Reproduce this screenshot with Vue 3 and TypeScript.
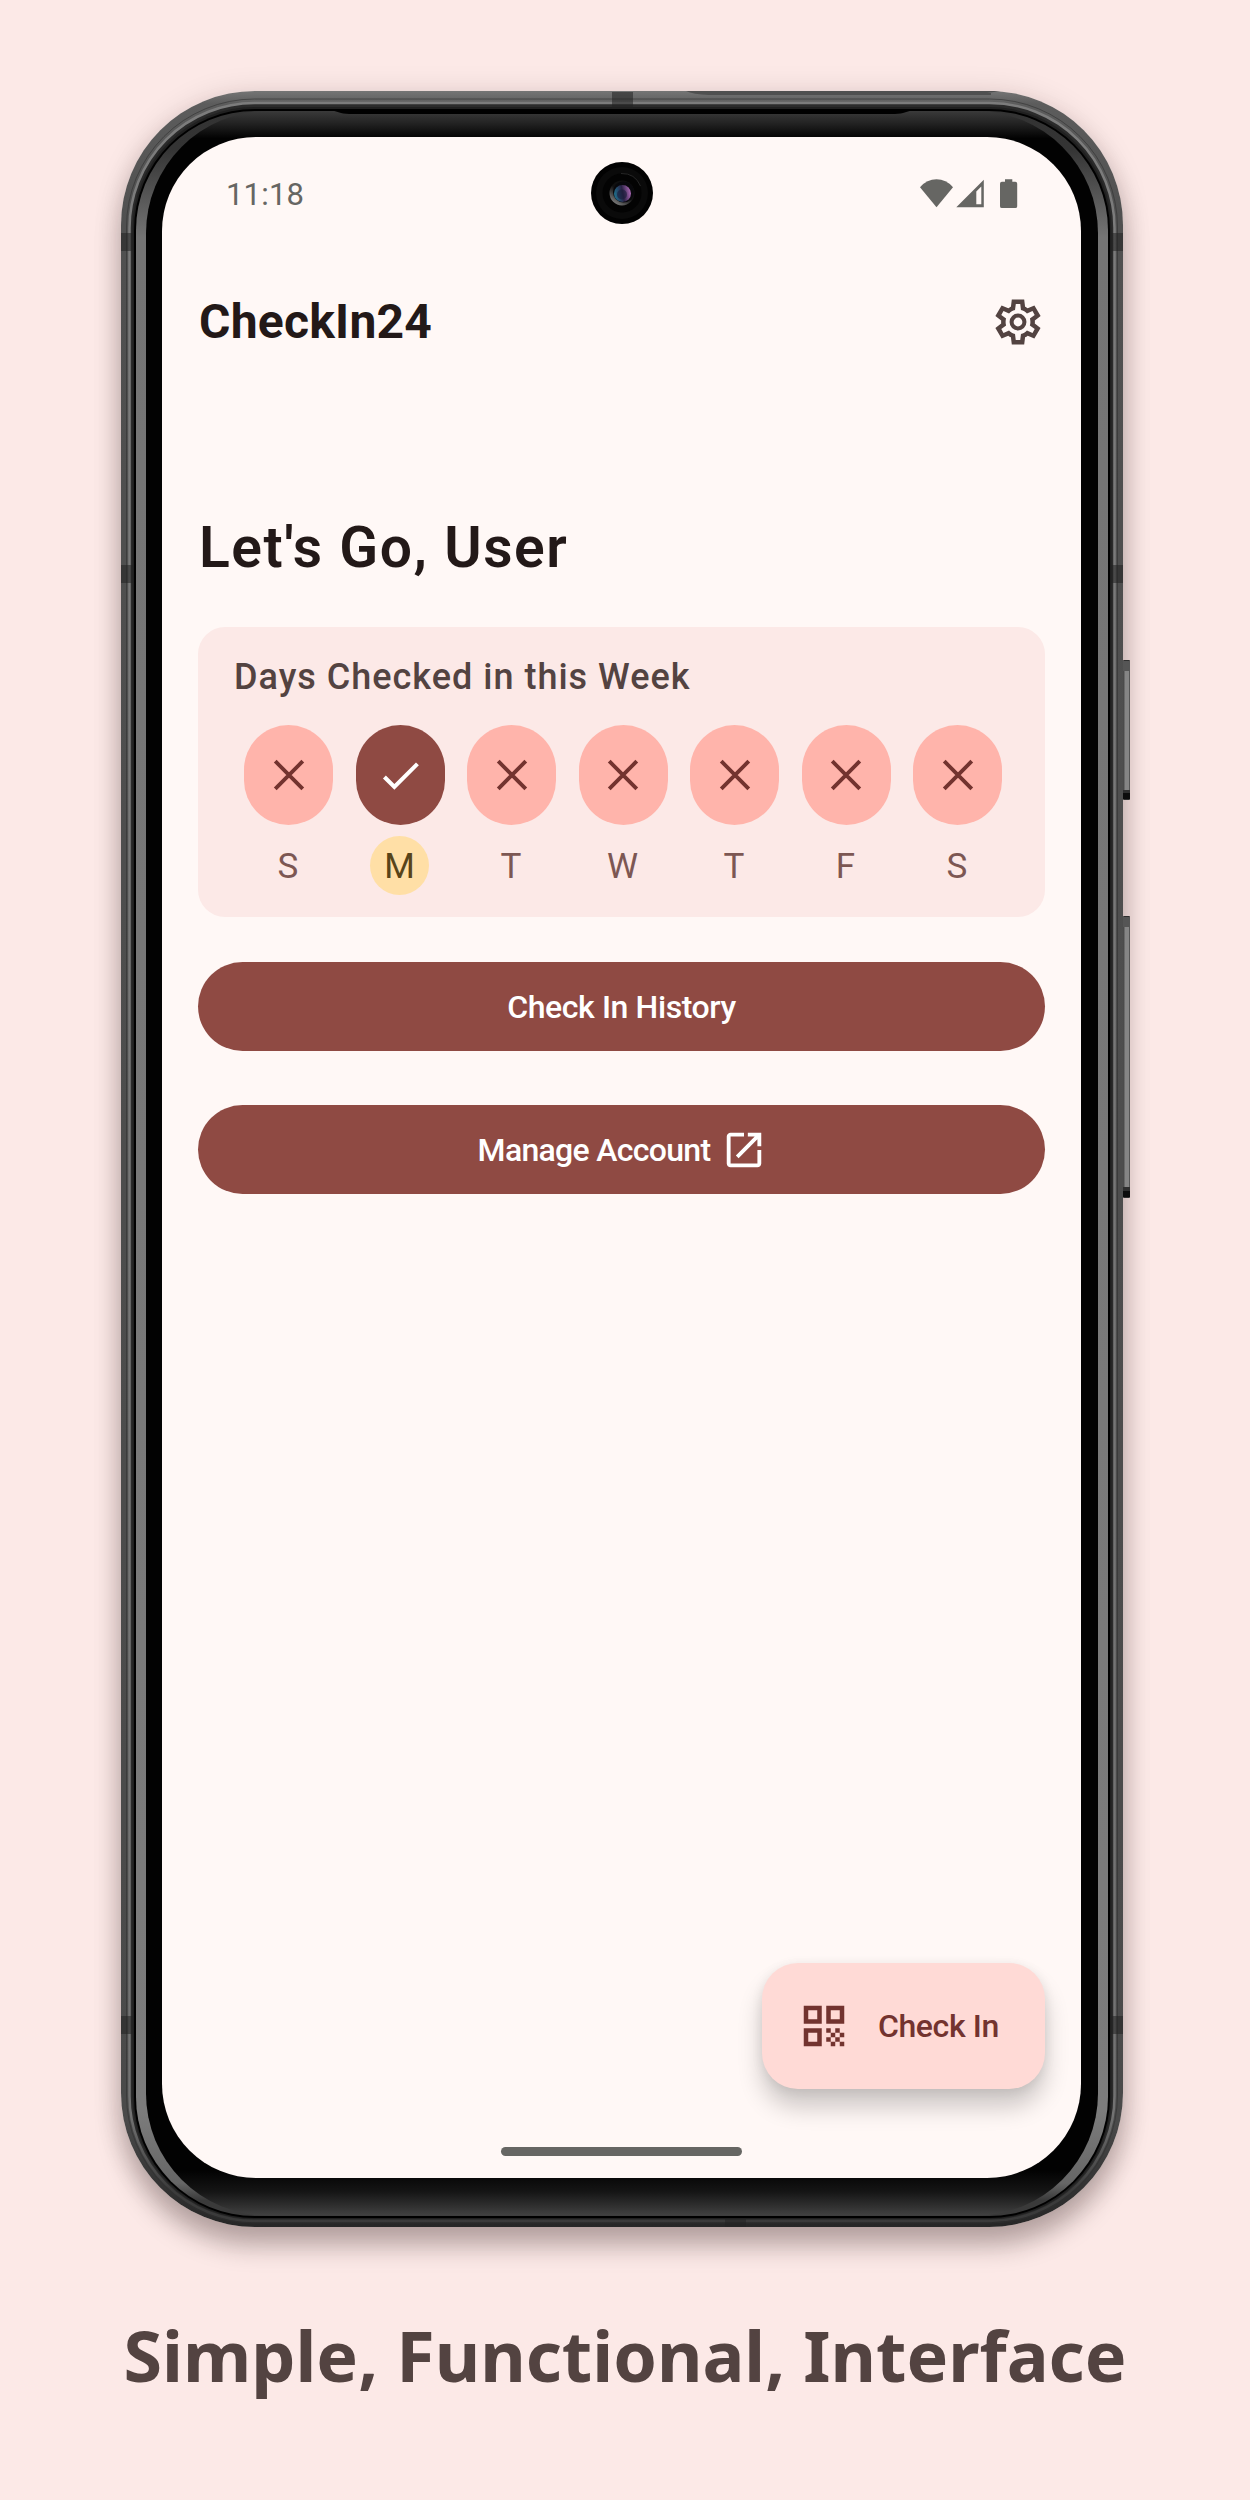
<script setup lang="ts">
interface Day {
  letter: string
  checked: boolean
  today: boolean
}

const days: Day[] = ['S', 'M', 'T', 'W', 'T', 'F', 'S'].map((letter, i) => ({
  letter,
  checked: i === 1,
  today: i === 1,
}))

const sideBands = [142, 474, 1925]
</script>

<template>
  <main class="poster">
    <div class="phone">
      <svg class="frame" width="1010" height="2136" viewBox="0 0 1010 2136" aria-hidden="true">
        <defs>
          <linearGradient id="rim" x1="0" y1="0" x2="0" y2="1">
            <stop offset="0" stop-color="#757575" />
            <stop offset="0.006" stop-color="#5c5c5c" />
            <stop offset="0.06" stop-color="#505050" />
            <stop offset="0.95" stop-color="#4a4a4a" />
            <stop offset="0.985" stop-color="#303030" />
            <stop offset="1" stop-color="#262626" />
          </linearGradient>
          <linearGradient id="shine" x1="0" y1="0" x2="0" y2="1">
            <stop offset="0" stop-color="#7c7c7c" />
            <stop offset="0.95" stop-color="#727272" />
            <stop offset="0.985" stop-color="#3c3c3c" />
            <stop offset="1" stop-color="#3a3a3a" />
          </linearGradient>
          <linearGradient id="edge" gradientUnits="userSpaceOnUse" x1="0" y1="20" x2="0" y2="2126">
            <stop offset="0" stop-color="#333333" />
            <stop offset="0.018" stop-color="#343434" />
            <stop offset="0.06" stop-color="#747474" />
            <stop offset="0.95" stop-color="#7c7c7c" />
            <stop offset="0.984" stop-color="#666666" />
            <stop offset="0.992" stop-color="#3a3a3a" />
          </linearGradient>
          <linearGradient id="glass" gradientUnits="userSpaceOnUse" x1="0" y1="20" x2="0" y2="2126">
            <stop offset="0" stop-color="#3a3a3a" />
            <stop offset="0.006" stop-color="#222222" />
            <stop offset="0.013" stop-color="#020202" />
            <stop offset="0.978" stop-color="#020202" />
            <stop offset="0.988" stop-color="#151515" />
            <stop offset="1" stop-color="#444444" />
          </linearGradient>
          <linearGradient id="key" x1="0" y1="0" x2="1" y2="0">
            <stop offset="0" stop-color="#3c3c3c" />
            <stop offset="0.35" stop-color="#858585" />
            <stop offset="0.8" stop-color="#858585" />
            <stop offset="1" stop-color="#3c3c3c" />
          </linearGradient>
        </defs>
        <rect x="0" y="0" width="1002" height="2136" rx="134" fill="url(#rim)" />
        <path d="M565 0H880l-14 2H870V4H588Q572 3.500 565 0Z" fill="#505050" />
        <rect x="5.500" y="8" width="991" height="2124" rx="128" fill="none" stroke="#303030" stroke-opacity="0.6" />
        <rect x="8.500" y="12" width="985" height="2118" rx="125" fill="#2b2b2b" stroke="url(#shine)" stroke-width="2.500" />
        <rect x="11.500" y="16" width="979" height="2112" rx="122" fill="#202020" />
        <rect x="13" y="18" width="976" height="2109" rx="121" fill="#000" />
        <rect x="15" y="20" width="972" height="2105" rx="119" fill="url(#edge)" />
        <rect x="25" y="20" width="952" height="2104.500" rx="122" fill="url(#glass)" />
        <path d="M210 19H792L782 22Q778 23 770 23H232Q224 23 220 22Z" fill="#000" />
        <g fill="#222" fill-opacity="0.55">
          <template v-for="y in sideBands" :key="y">
            <rect x="0" :y="y" width="12" height="18" />
            <rect x="990" :y="y" width="12" height="18" />
          </template>
          <rect x="491" y="1" width="21" height="17" />
          <rect x="604" y="2127" width="21" height="9" />
        </g>
        <g>
          <rect x="1002" y="569" width="7" height="140" rx="1" fill="#2e2e2e" />
          <rect x="1002" y="570" width="7" height="10" fill="#555" />
          <rect x="1002" y="580" width="7" height="119" fill="url(#key)" />
          <rect x="1002" y="825" width="7" height="282" rx="1" fill="#2e2e2e" />
          <rect x="1002" y="826" width="7" height="10" fill="#555" />
          <rect x="1002" y="836" width="7" height="260" fill="url(#key)" />
          <path d="M1002 702h7v6h-7zM1002 1100h7v6h-7z" fill="#0c0c0c" />
        </g>
      </svg>

      <div class="screen">
        <div class="status">
          <span class="clock">11:18</span>
          <svg class="camera" width="62" height="62" viewBox="0 0 62 62" aria-hidden="true">
            <defs>
              <linearGradient id="lens" x1="0" y1="0.500" x2="1" y2="0.300">
                <stop offset="0" stop-color="#1f6f8c" />
                <stop offset="0.5" stop-color="#2b2346" />
                <stop offset="1" stop-color="#b86fc0" />
              </linearGradient>
              <linearGradient id="ring" x1="0.200" y1="0.900" x2="0.700" y2="0.200">
                <stop offset="0" stop-color="#777" />
                <stop offset="0.6" stop-color="#101010" />
              </linearGradient>
            </defs>
            <circle cx="31" cy="31" r="31" fill="#020202" />
            <circle cx="31" cy="31" r="26" fill="#0a0a0a" />
            <circle cx="31" cy="31" r="19.500" fill="#030303" />
            <path d="M30 11.500Q44 11 49.500 24" fill="none" stroke="#262626" />
            <circle cx="31" cy="31" r="12.500" fill="url(#ring)" />
            <circle cx="32.500" cy="30" r="10.500" fill="#08080c" />
            <circle cx="31.500" cy="31.500" r="8.500" fill="url(#lens)" />
            <circle cx="31" cy="32.500" r="5" fill="#1b1d3a" fill-opacity="0.600" />
          </svg>
          <svg class="indicators" width="98" height="30" viewBox="0 0 98 30" aria-hidden="true">
            <path d="M0 8.200Q7 .3 16.500 .3T33 8.200L16.500 28.200Z" fill="#666663" />
            <path fill-rule="evenodd" d="M63.800 .8V28.200H36.300ZM61.300 7.500L56.300 12.500V25.200H61.300Z" fill="#666663" />
            <path d="M85 .3h7.300v2.500h3q1.900 0 1.900 1.900v22.500q0 1.900-1.900 1.900H81.900q-1.900 0-1.900-1.900V4.700q0-1.900 1.900-1.900H85Z" fill="#666663" />
          </svg>
        </div>

        <header class="topbar">
          <h1 class="brand">CheckIn24</h1>
          <svg width="54" height="54" viewBox="0 -960 960 960" fill="#534341" role="img" aria-label="Settings">
            <path d="m370-80-16-128q-13-5-24.500-12T307-235l-119 50L78-375l103-78q-1-7-1-13.500v-27q0-6.500 1-13.500L78-585l110-190 119 50q11-8 23-15t24-12l16-128h220l16 128q13 5 24.500 12t22.500 15l119-50 110 190-103 78q1 7 1 13.500v27q0 6.500-2 13.500l103 78-110 190-118-50q-11 8-23 15t-24 12L590-80H370Zm70-80h79l14-106q31-8 57.500-23.500T639-327l99 41 39-68-86-65q5-14 7-29.500t2-31.500q0-16-2-31.500t-7-29.500l86-65-39-68-99 42q-22-23-48.500-38.500T533-694l-13-106h-79l-14 106q-31 8-57.500 23.500T321-633l-99-41-39 68 86 64q-5 15-7 30t-2 32q0 16 2 31t7 30l-86 65 39 68 99-42q22 23 48.500 38.500T427-266l13 106Z" />
            <circle cx="480" cy="-480" r="114" fill="none" stroke="#534341" stroke-width="72" />
          </svg>
        </header>

        <h2 class="greeting">Let's Go, User</h2>

        <section class="week">
          <h3 class="week-title">Days Checked in this Week</h3>
          <ul class="days">
            <li v-for="(day, i) in days" :key="i" class="day">
              <span class="pill" :class="{ checked: day.checked }">
                <svg v-if="day.checked" width="49" height="49" viewBox="0 0 24 24" aria-hidden="true">
                  <path d="M9 16.170 4.830 12l-1.420 1.410L9 19 21 7l-1.410-1.410z" fill="#fff" />
                </svg>
                <svg v-else width="52" height="52" viewBox="0 0 24 24" aria-hidden="true">
                  <path d="M5.650 5.650 18.350 18.350M18.350 5.650 5.650 18.350" stroke="#73332f" stroke-width="1.800" fill="none" />
                </svg>
              </span>
              <span class="letter" :class="{ today: day.today }">{{ day.letter }}</span>
            </li>
          </ul>
        </section>

        <button class="action" type="button"><span>Check In History</span></button>
        <button class="action" type="button">
          <span class="manage">Manage Account</span>
          <svg width="46" height="46" viewBox="0 0 24 24" fill="#fff" aria-hidden="true">
            <path d="M19 19H5V5h7V3H5c-1.110 0-2 .9-2 2v14c0 1.100.89 2 2 2h14c1.100 0 2-.9 2-2v-7h-2v7zM14 3v2h3.590l-9.830 9.830 1.410 1.410L19 6.410V10h2V3h-7z" />
          </svg>
        </button>

        <button class="fab" type="button">
          <svg width="54" height="54" viewBox="0 0 24 24" fill="#73332f" aria-hidden="true">
            <path fill-rule="evenodd" d="M3 3h8v8H3zM5 5v4h4V5zM3 13h8v8H3zM5 15v4h4v-4zM13 3h8v8h-8zM15 5v4h4V5z" />
            <path d="M19 19h2v2h-2zM13 13h2v2h-2zM15 15h2v2h-2zM13 17h2v2h-2zM15 19h2v2h-2zM17 17h2v2h-2zM17 13h2v2h-2zM19 15h2v2h-2z" />
          </svg>
          <span class="fab-label">Check In</span>
        </button>
        <div class="home"></div>
      </div>
    </div>
    <p class="caption">Simple, Functional, Interface</p>
  </main>
</template>

<style>
body {
  margin: 0;
  background: #fce9e7;
}
</style>

<style scoped>
.poster {
  box-sizing: border-box;
  width: 1250px;
  height: 2500px;
  padding-top: 91px;
  overflow: hidden;
  background: #fce9e7;
  font-family: Roboto, sans-serif;
}
.phone {
  display: grid;
  width: 1002px;
  height: 2136px;
  margin-left: 121px;
  border-radius: 134px;
  box-shadow: 0 19px 26px rgba(30, 10, 10, 0.28), 0 2px 30px rgba(30, 10, 10, 0.12);
}
.frame {
  display: block;
  grid-area: 1 / 1;
}
.screen {
  grid-area: 1 / 1;
  z-index: 1;
  box-sizing: border-box;
  display: flex;
  flex-direction: column;
  width: 919px;
  height: 2041px;
  margin: 46px 0 0 41px;
  padding: 0 36px;
  border-radius: 94px;
  background: #fff8f6;
}
.status {
  display: grid;
  grid-template-columns: 1fr 62px 1fr;
  align-items: center;
  height: 62px;
  margin-top: 25px;
  padding: 0 27px 0 28px;
}
.clock {
  padding-top: 3px;
  font-size: 31px;
  line-height: 59px;
  letter-spacing: 0.200px;
  color: #666663;
}
.camera {
  display: block;
}
.indicators {
  display: block;
  justify-self: end;
  margin-top: 2px;
}
.topbar {
  display: flex;
  align-items: center;
  justify-content: space-between;
  height: 60px;
  margin-top: 68px;
}
.brand {
  margin: 0 0 0 1px;
  font-size: 48px;
  line-height: 60px;
  letter-spacing: 0.250px;
  font-weight: 700;
  color: #231918;
}
.greeting {
  margin: 158px 0 0 1px;
  font-size: 57px;
  line-height: 76px;
  letter-spacing: 1.550px;
  font-weight: 600;
  color: #231918;
}
.week {
  box-sizing: border-box;
  height: 290px;
  margin-top: 41px;
  padding: 27px 43px 0 46px;
  border-radius: 27px;
  background: #fce9e7;
}
.week-title {
  margin: 0 0 0 -10px;
  font-size: 36px;
  line-height: 46px;
  letter-spacing: 1px;
  font-weight: 500;
  color: #534341;
}
.days {
  display: flex;
  justify-content: space-between;
  margin: 25px 0 0;
  padding: 0;
  list-style: none;
}
.day {
  display: flex;
  flex-direction: column;
  align-items: center;
  width: 89px;
}
.pill {
  display: flex;
  align-items: center;
  justify-content: center;
  width: 89px;
  height: 100px;
  border-radius: 44.500px;
  background: #ffb4ab;
}
.pill.checked {
  background: #8f4a43;
}
.letter {
  width: 59px;
  height: 59px;
  margin: 11px 1px 0 0;
  border-radius: 50%;
  font-size: 35px;
  line-height: 61px;
  text-align: center;
  color: #7c5753;
}
.letter.today {
  background: #ffdfa6;
  color: #584419;
}
.action {
  display: flex;
  flex-shrink: 0;
  align-items: center;
  justify-content: center;
  gap: 11px;
  height: 89px;
  margin: 45px 0 0;
  padding: 0;
  border: 0;
  border-radius: 44.500px;
  background: #8f4a43;
  color: #fff;
  font-family: inherit;
  font-size: 32px;
  letter-spacing: -0.400px;
  font-weight: 500;
}
.action + .action {
  margin-top: 54px;
  padding-left: 2px;
}
.manage {
  letter-spacing: -0.700px;
}
.fab {
  display: flex;
  align-items: center;
  align-self: flex-end;
  width: 283px;
  height: 126px;
  margin: auto 0 0;
  padding: 0 0 0 35px;
  border: 0;
  border-radius: 36px;
  background: #ffdad6;
  box-shadow: 0 18px 24px rgba(0, 0, 0, 0.2), 0 2px 12px rgba(0, 0, 0, 0.08);
  color: #73332f;
  font-family: inherit;
  font-size: 32px;
  letter-spacing: -0.400px;
  font-weight: 500;
}
.fab-label {
  margin-left: 27px;
}
.home {
  align-self: center;
  width: 241px;
  height: 9px;
  margin: 58px 0 22px;
  border-radius: 5px;
  background: #666663;
}
.caption {
  margin: 80px 0 0;
  font-family: "Noto Sans", sans-serif;
  font-size: 70px;
  line-height: 96px;
  font-weight: 700;
  text-align: center;
  white-space: nowrap;
  color: #534341;
}
</style>
